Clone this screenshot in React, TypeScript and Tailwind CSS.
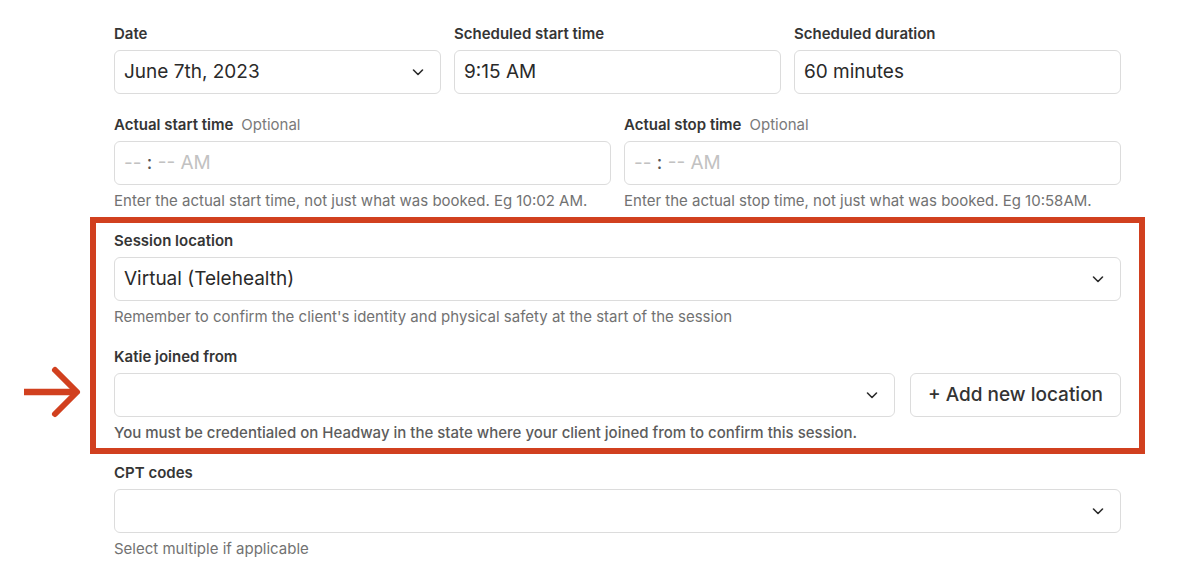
import React from "react";

const font = "font-['Inter','Liberation_Sans',sans-serif]";

function Chevron() {
  return (
    <svg width="14" height="14" viewBox="0 0 14 14" fill="none" className="shrink-0">
      <path d="M2.5 5 L7 9.5 L11.5 5" stroke="#2b2b2b" strokeWidth="1.6" strokeLinecap="round" strokeLinejoin="round" />
    </svg>
  );
}

function Label({ text, optional }: { text: string; optional?: boolean }) {
  return (
    <div className="h-[20px] leading-[20px] text-[15px] font-semibold text-[#353535] mb-[6px]">
      {text}
      {optional && <span className="ml-[8px] font-normal text-[#7a7a7a]">Optional</span>}
    </div>
  );
}

function Box({ children, select }: { children?: React.ReactNode; select?: boolean }) {
  return (
    <div className="h-[44px] border border-[#dcdcdc] rounded-[6px] pl-[9px] pr-[15px] flex items-center justify-between text-[19px] text-[#2a2a2a]">
      <span>{children}</span>
      {select && <Chevron />}
    </div>
  );
}

function Help({ text, strong }: { text: string; strong?: boolean }) {
  return (
    <div
      className={`mt-[6px] h-[20px] leading-[20px] text-[15px] ${
        strong ? "font-medium text-[#5c5c5c]" : "text-[#727272]"
      }`}
    >
      {text}
    </div>
  );
}

function TimePlaceholder() {
  return (
    <span className="text-[#c2c2c2]">
      -- <span className="text-[#555]">:</span> -- AM
    </span>
  );
}

export default function App() {
  return (
    <div className={`w-[1198px] h-[568px] bg-white overflow-hidden ${font}`}>
      <div className="ml-[114px] w-[1007px] pt-[24px]">
        {/* Scheduled row */}
        <div className="grid grid-cols-3 gap-[13px]">
          <div>
            <Label text="Date" />
            <Box select>June 7th, 2023</Box>
          </div>
          <div>
            <Label text="Scheduled start time" />
            <Box>9:15 AM</Box>
          </div>
          <div>
            <Label text="Scheduled duration" />
            <Box>60 minutes</Box>
          </div>
        </div>

        {/* Actual times */}
        <div className="grid grid-cols-2 gap-[13px] mt-[21px]">
          <div>
            <Label text="Actual start time" optional />
            <Box>
              <TimePlaceholder />
            </Box>
            <Help text="Enter the actual start time, not just what was booked. Eg 10:02 AM." />
          </div>
          <div>
            <Label text="Actual stop time" optional />
            <Box>
              <TimePlaceholder />
            </Box>
            <Help text="Enter the actual stop time, not just what was booked. Eg 10:58AM." />
          </div>
        </div>

        {/* Highlighted location section */}
        <div className="relative mt-[6px] -mx-[24px] border-[6px] border-[#d1401f] px-[18px] pt-[8px] pb-[5px]">
          <svg
            width="60"
            height="64"
            viewBox="0 0 60 64"
            fill="none"
            className="absolute left-[-72px] top-[138px]"
          >
            <path d="M0 31 H52" stroke="#d1401f" strokeWidth="6.5" />
            <path
              d="M31 9 L53 31 L31 53"
              stroke="#d1401f"
              strokeWidth="6"
              strokeLinecap="round"
              strokeLinejoin="round"
            />
          </svg>
          <Label text="Session location" />
          <Box select>Virtual (Telehealth)</Box>
          <Help text="Remember to confirm the client's identity and physical safety at the start of the session" />

          <div className="mt-[20px]">
            <Label text="Katie joined from" />
            <div className="flex gap-[15px]">
              <div className="flex-1">
                <Box select />
              </div>
              <button className="w-[211px] h-[44px] border border-[#dcdcdc] rounded-[6px] text-[19px] font-medium text-[#333] flex items-center justify-center">
                + Add new location
              </button>
            </div>
            <Help strong text="You must be credentialed on Headway in the state where your client joined from to confirm this session." />
          </div>
        </div>

        {/* CPT codes */}
        <div className="mt-[9px]">
          <Label text="CPT codes" />
          <Box select />
          <Help text="Select multiple if applicable" />
        </div>
      </div>
    </div>
  );
}
